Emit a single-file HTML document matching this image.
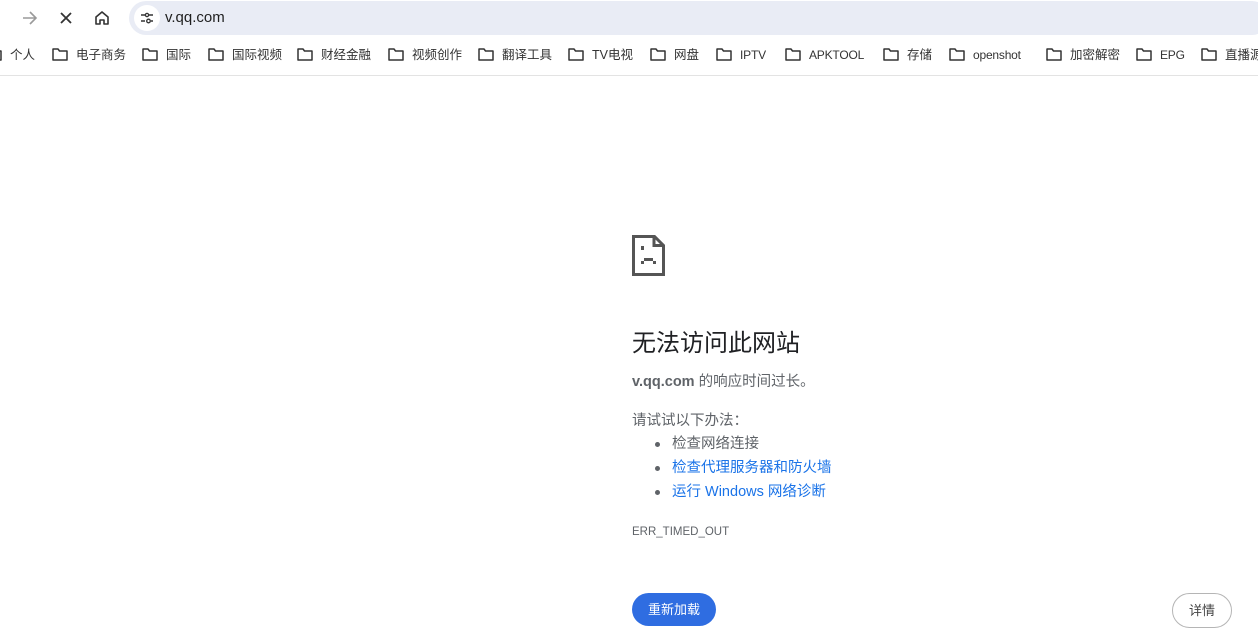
<!DOCTYPE html>
<html><head><meta charset="utf-8"><style>
*{margin:0;padding:0;box-sizing:border-box}
body{width:1258px;height:632px;overflow:hidden;background:#fff;font-family:"Liberation Sans","Noto Sans CJK SC",sans-serif;position:relative;color:#5f6368}
.top{position:absolute;left:0;top:0;width:1258px;height:76px;background:#fff;border-bottom:1px solid #e3e3e3}
.omni{position:absolute;left:129px;top:1px;width:1140px;height:34px;border-radius:17px;background:#e9ecf5}
.tune{position:absolute;left:134px;top:5px;width:26px;height:26px;border-radius:13px;background:#fff}
.url{position:absolute;left:165px;top:9px;font-size:15px;line-height:18px;color:#1f1f1f}
.bm{position:absolute;top:47px;font-size:12.5px;line-height:16px;height:16px;color:#333;white-space:nowrap}
.bi{position:absolute;top:48px;width:16px;height:13px}
.a{position:absolute}
h1{position:absolute;left:632px;top:323px;font-size:24px;font-weight:normal;color:#202124}
.t{position:absolute;font-size:14.5px;line-height:18px;white-space:nowrap}
.blue{color:#1a73e8}
.dot{position:absolute;width:5px;height:5px;border-radius:50%;background:#5f6368}
.btn{position:absolute;left:632px;top:593px;width:84px;height:33px;border-radius:17px;background:#2f6de1;color:#fff;font-size:13px;text-align:center;line-height:33px}
.det{position:absolute;left:1172px;top:593px;width:60px;height:35px;border-radius:18px;border:1px solid #b5b5b5;color:#444;font-size:13px;text-align:center;line-height:33px}
</style></head><body>
<div class="top">
<svg class="a" style="left:21px;top:10px" width="18" height="16" viewBox="0 0 18 16"><path d="M2 8h13M9 2l6 6-6 6" stroke="#9a9a9a" stroke-width="1.6" fill="none"/></svg>
<svg class="a" style="left:59px;top:11px" width="14" height="14"><path d="M2 2l10 10M12 2L2 12" stroke="#333" stroke-width="1.8"/></svg>
<svg class="a" style="left:94px;top:10px" width="16" height="16" viewBox="0 0 16 16"><path d="M2 7L8 2l6 5v7h-4v-4H6v4H2z" stroke="#333" stroke-width="1.6" fill="none" stroke-linejoin="round"/></svg>
<div class="omni"></div>
<div class="tune"><svg width="26" height="26"><path d="M7 10h4M15 10h4M7 16h4M17 16h2" stroke="#333" stroke-width="1.5"/><circle cx="13" cy="10" r="1.6" fill="none" stroke="#333" stroke-width="1.3"/><circle cx="14.5" cy="16" r="1.8" fill="none" stroke="#333" stroke-width="1.3"/></svg></div>
<div class="url">v.qq.com</div>
<div id="bms"></div>
</div>
<svg class="a" style="left:632px;top:235px" width="33" height="41" viewBox="0 0 33 41"><path d="M1.5 1.5h21l9 9v29h-30z" fill="none" stroke="#555" stroke-width="3"/><path d="M22 1.5v9h9" fill="none" stroke="#555" stroke-width="3"/><rect x="9" y="11" width="3" height="4" fill="#555"/><rect x="9" y="26" width="3" height="3" fill="#555"/><rect x="12" y="23" width="9" height="3" fill="#555"/><rect x="21" y="26" width="3" height="3" fill="#555"/></svg>
<h1>无法访问此网站</h1>
<div class="t" style="left:632px;top:373px"><b>v.qq.com</b> 的响应时间过长。</div>
<div class="t" style="left:632px;top:412px">请试试以下办法：</div>
<div class="dot" style="left:655px;top:442px"></div><div class="t" style="left:672px;top:435px">检查网络连接</div>
<div class="dot" style="left:655px;top:466px"></div><div class="t blue" style="left:672px;top:459px">检查代理服务器和防火墙</div>
<div class="dot" style="left:655px;top:490px"></div><div class="t blue" style="left:672px;top:483px">运行 Windows 网络诊断</div>
<div class="t" style="left:632px;top:523px;font-size:11.5px">ERR_TIMED_OUT</div>
<div class="btn">重新加载</div>
<div class="det">详情</div>
<script>
var b=[[-14,"个人"],[52,"电子商务"],[142,"国际"],[208,"国际视频"],[297,"财经金融"],[388,"视频创作"],[478,"翻译工具"],[568,"TV电视"],[650,"网盘"],[716,"IPTV"],[785,"APKTOOL"],[883,"存储"],[949,"openshot"],[1046,"加密解密"],[1136,"EPG"],[1201,"直播源"]];
var h="";b.forEach(function(x){h+='<svg class="bi" style="left:'+x[0]+'px" viewBox="0 0 16 13"><path d="M1 1h5l1.5 2H15v9H1z" fill="none" stroke="#333" stroke-width="1.5" stroke-linejoin="round"/></svg><div class="bm" style="left:'+(x[0]+24)+'px;'+(/^[A-Za-z]+$/.test(x[1])?'font-size:12px;letter-spacing:-0.2px':'')+'">'+x[1]+'</div>';});
document.getElementById("bms").innerHTML=h;
</script>
</body></html>
